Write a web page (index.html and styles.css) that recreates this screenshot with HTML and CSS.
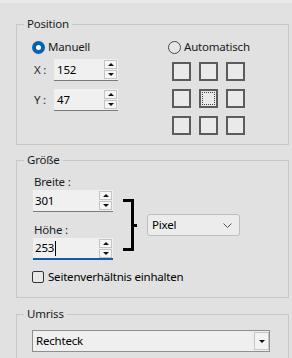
FILE: index.html
```html
<!DOCTYPE html>
<html lang="de">
<head>
    <meta charset="UTF-8">
    <meta name="viewport" content="width=device-width, initial-scale=1.0">
    <title>Position und Größe</title>

    <link rel="stylesheet" href="styles.css">
</head>
<body>
    <div class="topbar"></div>

    <div class="panel">
        <fieldset class="group">
            <legend>Position</legend>
            <div class="pos-body">
                <div class="pos-left">
                    <label class="radio"><span class="radio-dot checked"></span>Manuell</label>

                    <div class="field-row">
                        <span class="axis">X :</span>
                        <div class="spin">
                            <span class="spin-value">152</span>
                            <span class="spin-buttons"><span class="spin-btn up"></span><span class="spin-btn down"></span></span>
                        </div>
                    </div>

                    <div class="field-row second">
                        <span class="axis">Y :</span>
                        <div class="spin">
                            <span class="spin-value">47</span>
                            <span class="spin-buttons"><span class="spin-btn up"></span><span class="spin-btn down"></span></span>
                        </div>
                    </div>
                </div>

                <div class="pos-right">
                    <label class="radio"><span class="radio-dot"></span>Automatisch</label>

                    <div class="anchor-grid">
                        <span class="anchor"></span>
                        <span class="anchor"></span>
                        <span class="anchor"></span>
                        <span class="anchor"></span>
                        <span class="anchor selected"><span class="anchor-focus"></span></span>
                        <span class="anchor"></span>
                        <span class="anchor"></span>
                        <span class="anchor"></span>
                        <span class="anchor"></span>
                    </div>
                </div>
            </div>
        </fieldset>

        <fieldset class="group">
            <legend>Größe</legend>
            <div class="size-body">
                <div class="size-row">
                    <div class="size-fields">
                        <div class="field-label">Breite :</div>
                        <div class="spin wide">
                            <span class="spin-value">301</span>
                            <span class="spin-buttons"><span class="spin-btn up"></span><span class="spin-btn down"></span></span>
                        </div>

                        <div class="field-label gap">Höhe :</div>
                        <div class="spin wide focused">
                            <span class="spin-value">253<span class="caret"></span></span>
                            <span class="spin-buttons"><span class="spin-btn up"></span><span class="spin-btn down"></span></span>
                        </div>
                    </div>

                    <div class="link">
                        <span class="brace"></span>
                        <span class="brace-tick"></span>
                    </div>

                    <div class="combo unit">
                        <span class="combo-text">Pixel</span>
                        <svg class="chevron" width="9" height="5" viewBox="0 0 9 5">
                            <path d="M0.5 0.5 L4.5 4.5 L8.5 0.5" fill="none" stroke="#555" stroke-width="1"/>
                        </svg>
                    </div>
                </div>

                <label class="checkbox"><span class="check-box"></span>Seitenverhältnis einhalten</label>
            </div>
        </fieldset>

        <fieldset class="group">
            <legend>Umriss</legend>
            <div class="outline-body">
                <div class="combo shape">
                    <span class="combo-text">Rechteck</span>
                    <span class="combo-button"></span>
                </div>
            </div>
        </fieldset>
    </div>
</body>
</html>
```

FILE: styles.css
```css
html, body {
    overflow: hidden;
}

body {
    margin: 0;
    background-color: #e1e1e1;
    font-family: "Noto Sans", sans-serif;
    font-size: 11.5px;
    letter-spacing: -0.2px;
    line-height: 16px;
    color: #1a1a1a;
}

.topbar {
    height: 3px;
    background-color: #eaeaee;
}

.panel {
    padding: 13px 3px 0 16px;
}

/* group boxes */

.group {
    margin: 0;
    padding: 0;
    min-width: 0;
    border: 1px solid #c8c8c8;
}

.group + .group {
    margin-top: 7px;
}

.group:last-child {
    margin-top: 8px;
}

.group legend {
    margin-left: 7px;
    padding: 0 3px;
    line-height: 16px;
}

/* Position */

.pos-body {
    display: flex;
    padding: 7px 0 9px 15px;
}

.pos-left {
    width: 136px;
}

.radio {
    display: flex;
    align-items: center;
    gap: 3px;
    height: 16px;
}

.radio-dot {
    width: 11px;
    height: 11px;
    border: 1px solid #4a4a4a;
    border-radius: 50%;
    background-color: #e6e6e6;
    display: flex;
    align-items: center;
    justify-content: center;
}

.radio-dot.checked {
    width: 13px;
    height: 13px;
    border: none;
    background-color: #0063b1;
}

.radio-dot.checked::before {
    content: "";
    width: 5px;
    height: 5px;
    border-radius: 50%;
    background-color: #fff;
}

.field-row {
    display: flex;
    align-items: center;
    margin-top: 4px;
}

.field-row.second {
    margin-top: 8px;
}

.axis {
    width: 20px;
    padding-left: 2px;
    color: #2a2a2a;
}

/* spin boxes */

.spin {
    display: flex;
    align-items: center;
    width: 64px;
    height: 22px;
    padding-left: 3px;
    box-sizing: border-box;
    background-color: #f0f0f0;
    border-bottom: 1px solid #7a7a7a;
}

.spin.wide {
    width: 80px;
    padding-left: 2px;
}

.spin.focused {
    border-bottom: 2px solid #0a5fad;
}

.spin-value {
    flex: 1;
    display: flex;
    align-items: center;
    color: #000;
}

.caret {
    width: 1px;
    height: 15px;
    margin-left: 1px;
    background-color: #000;
}

.spin-buttons {
    display: flex;
    flex-direction: column;
    gap: 1px;
    margin-right: 1px;
}

.spin-btn {
    width: 11px;
    height: 7px;
    border: 1px solid #c4c4c4;
    background-color: #f6f6f6;
    display: flex;
    align-items: center;
    justify-content: center;
}

.spin-btn::before {
    content: "";
    border-left: 3px solid transparent;
    border-right: 3px solid transparent;
}

.spin-btn.up::before {
    border-bottom: 3px solid #111;
}

.spin-btn.down::before {
    border-top: 3px solid #111;
}

/* anchor grid */

.anchor-grid {
    display: grid;
    grid-template-columns: repeat(3, 19px);
    grid-auto-rows: 19px;
    gap: 8px;
    margin: 7px 0 0 4px;
}

.anchor {
    box-sizing: border-box;
    border: 2px solid #5c5c5c;
    background-color: #eaeaea;
    display: flex;
    align-items: center;
    justify-content: center;
}

.anchor-focus {
    width: 11px;
    height: 11px;
    border: 1px dotted #444;
}

/* Größe */

.size-body {
    padding: 6px 0 12px 16px;
}

.size-row {
    display: flex;
    align-items: flex-start;
}

.size-fields {
    width: 80px;
}

.field-label {
    padding-left: 1px;
}

.field-label.gap {
    margin-top: 10px;
}

.link {
    display: flex;
    align-items: center;
    margin: 25px 0 0 10px;
}

.brace {
    width: 8px;
    height: 46px;
    border: 3px solid #000;
    border-left: none;
}

.brace-tick {
    width: 3px;
    height: 3px;
    background-color: #000;
}

.combo {
    display: flex;
    align-items: center;
    box-sizing: border-box;
    height: 22px;
}

.combo.unit {
    width: 93px;
    margin: 40px 0 0 10px;
    padding: 0 4px 0 4px;
    border: 1px solid #bdbdbd;
    border-radius: 3px;
    background-color: #ececec;
    color: #000;
}

.combo-text {
    flex: 1;
}

.chevron {
    margin-right: 3px;
}

.checkbox {
    display: flex;
    align-items: center;
    gap: 4px;
    margin: 9px 0 0 -1px;
    height: 16px;
    color: #000;
}

.check-box {
    width: 10px;
    height: 10px;
    border: 1px solid #333;
    border-radius: 2px;
    background-color: #e8e8e8;
}

/* Umriss */

.outline-body {
    padding: 8px 18px 20px 15px;
}

.combo.shape {
    width: 238px;
    padding-left: 3px;
    border: 1px solid #8f8f8f;
    background-color: #efefef;
    color: #000;
}

.combo-button {
    width: 13px;
    height: 16px;
    border: 1px solid #c6c6c6;
    background-color: #f3f3f3;
    display: flex;
    align-items: center;
    justify-content: center;
}

.combo-button::before {
    content: "";
    border-left: 3px solid transparent;
    border-right: 3px solid transparent;
    border-top: 3px solid #111;
}
```
